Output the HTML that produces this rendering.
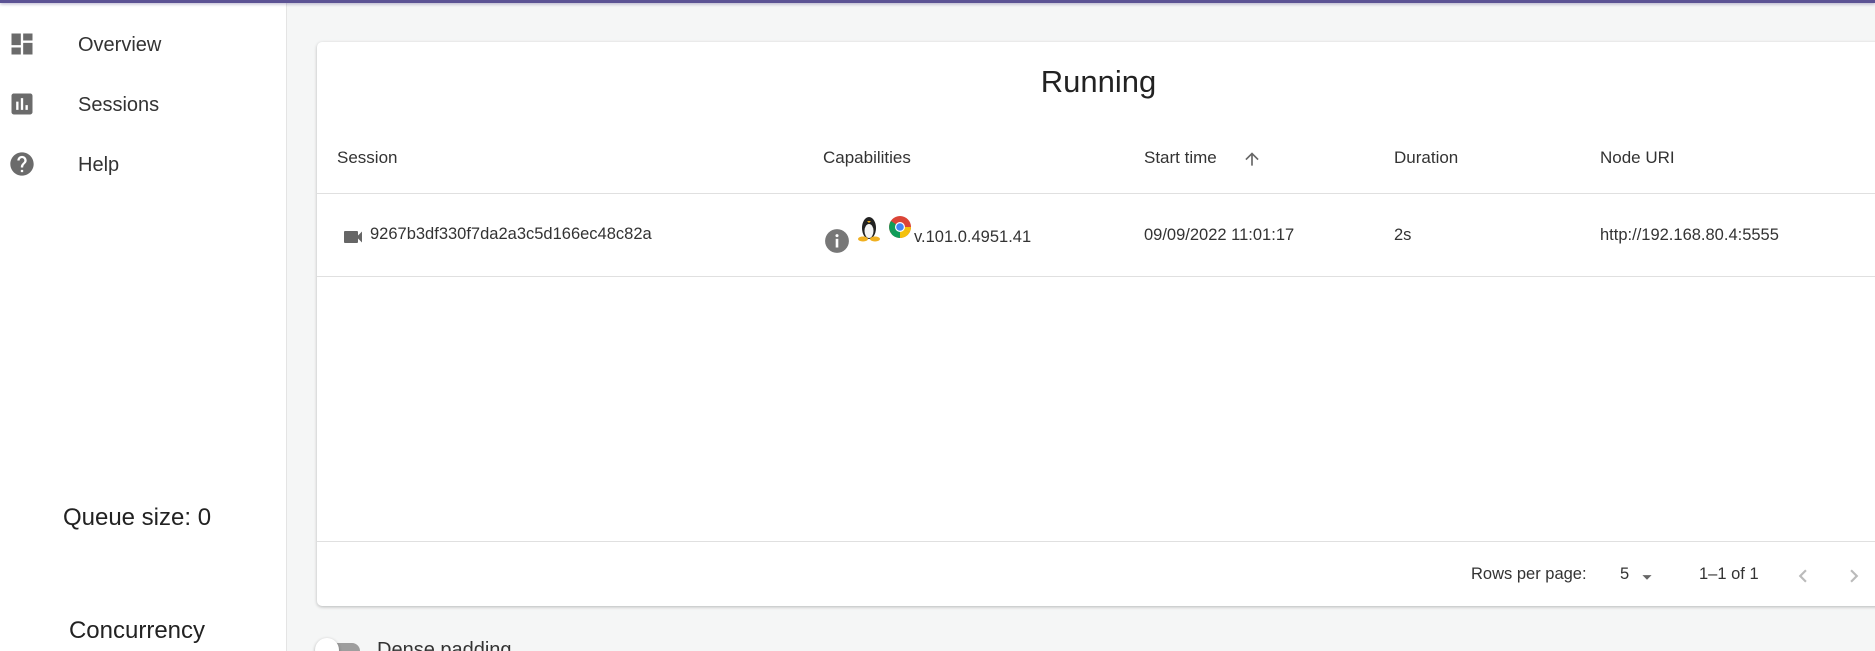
<!DOCTYPE html>
<html><head><style>
*{box-sizing:border-box;margin:0;padding:0}
html{overflow:hidden;height:651px}
body{width:1875px;height:651px;overflow:hidden;background:#f5f6f6;font-family:"Liberation Sans",sans-serif;color:#333;position:relative}
.top{position:absolute;left:0;top:0;width:1875px;height:3px;background:#5c5394;box-shadow:0 1px 3px rgba(60,50,120,.4);z-index:2}
.side{position:absolute;left:0;top:0;width:287px;height:651px;background:#fff;border-right:1px solid #e4e4e4}
.nav{position:absolute;left:78px;font-size:20px;color:#333}
.ico{position:absolute;left:8px}
.card{position:absolute;left:317px;top:42px;width:1570px;height:564px;background:#fff;border-radius:5px;box-shadow:0 1px 3px rgba(0,0,0,.25)}
.t{position:absolute;font-size:17px;color:#333;white-space:nowrap}
.line{position:absolute;left:0;width:100%;height:1px;background:#e0e0e0}
</style></head><body>
<div class="top"></div>
<div class="side">
<svg class="ico" style="top:30px" width="28" height="28" viewBox="0 0 24 24"><path fill="#6b6b6b" d="M3 13h8V3H3v10zm0 8h8v-6H3v6zm10 0h8V11h-8v10zm0-18v6h8V3h-8z"/></svg>
<div class="nav" style="top:34px">Overview</div>
<svg class="ico" style="top:90px" width="28" height="28" viewBox="0 0 24 24"><path fill="#6b6b6b" d="M19 3H5c-1.1 0-2 .9-2 2v14c0 1.1.9 2 2 2h14c1.1 0 2-.9 2-2V5c0-1.1-.9-2-2-2zM9 17H7v-7h2v7zm4 0h-2V7h2v10zm4 0h-2v-4h2v4z"/></svg>
<div class="nav" style="top:94px">Sessions</div>
<svg class="ico" style="top:150px" width="28" height="28" viewBox="0 0 24 24"><path fill="#6b6b6b" d="M12 2C6.48 2 2 6.48 2 12s4.48 10 10 10 10-4.48 10-10S17.52 2 12 2zm1 17h-2v-2h2v2zm2.07-7.75l-.9.92C13.45 12.9 13 13.5 13 15h-2v-.5c0-1.1.45-2.1 1.17-2.83l1.24-1.26c.37-.36.59-.86.59-1.41 0-1.1-.9-2-2-2s-2 .9-2 2H8c0-2.21 1.79-4 4-4s4 1.79 4 4c0 .88-.36 1.68-.93 2.25z"/></svg>
<div class="nav" style="top:154px">Help</div>
<div style="position:absolute;left:0;width:274px;text-align:center;top:504px;font-size:24px;color:#222">Queue size: 0</div>
<div style="position:absolute;left:0;width:274px;text-align:center;top:617px;font-size:24px;color:#222">Concurrency</div>
</div>
<div class="card">
<div class="t" style="left:0;width:1563px;text-align:center;top:22px;font-size:31px;color:#222">Running</div>
<div class="t" style="left:20px;top:106px">Session</div>
<div class="t" style="left:506px;top:106px">Capabilities</div>
<div class="t" style="left:827px;top:106px">Start time</div>
<svg style="position:absolute;left:925px;top:107px" width="20" height="20" viewBox="0 0 24 24"><path fill="#666" d="M4 12l1.41 1.41L11 7.83V20h2V7.83l5.58 5.59L20 12l-8-8-8 8z"/></svg>
<div class="t" style="left:1077px;top:106px">Duration</div>
<div class="t" style="left:1283px;top:106px">Node URI</div>
<div class="line" style="top:151px"></div>
<svg style="position:absolute;left:24px;top:183px" width="24" height="24" viewBox="0 0 24 24"><path fill="#666" d="M17 10.5V7c0-.55-.45-1-1-1H4c-.55 0-1 .45-1 1v10c0 .55.45 1 1 1h12c.55 0 1-.45 1-1v-3.5l4 4v-11l-4 4z"/></svg>
<div class="t" style="left:53px;top:183px;font-size:16.5px">9267b3df330f7da2a3c5d166ec48c82a</div>
<svg style="position:absolute;left:507px;top:186px" width="26" height="26" viewBox="0 0 24 24"><circle cx="12" cy="12" r="11" fill="#777"/><rect x="10.8" y="10" width="2.4" height="8" fill="#fff"/><circle cx="12" cy="7" r="1.4" fill="#fff"/></svg>
<svg style="position:absolute;left:540px;top:170px" width="24" height="30" viewBox="0 0 24 30"><ellipse cx="12" cy="16" rx="7" ry="11" fill="#222"/><ellipse cx="12" cy="19" rx="4.5" ry="7" fill="#f4f4f4"/><ellipse cx="6" cy="27" rx="5" ry="2.5" fill="#f0b020"/><ellipse cx="18" cy="27" rx="5" ry="2.5" fill="#f0b020"/><path d="M10 9h4l-2 2z" fill="#f0b020"/></svg>
<svg style="position:absolute;left:571px;top:173px" width="24" height="24" viewBox="0 0 24 24"><circle cx="12" cy="12" r="11" fill="#db4437"/><path d="M12 12L2.5 17.5A11 11 0 0 0 12 23z" fill="#0f9d58"/><path d="M12 12L2.5 17.5A11 11 0 0 1 3 6z" fill="#0f9d58"/><path d="M12 12L21.5 17.5A11 11 0 0 1 12 23z" fill="#f4c20d"/><path d="M12 12L23 12A11 11 0 0 1 21.5 17.5z" fill="#f4c20d"/><circle cx="12" cy="12" r="5" fill="#fff"/><circle cx="12" cy="12" r="3.8" fill="#4285f4"/></svg>
<div class="t" style="left:597px;top:186px;font-size:16.5px">v.101.0.4951.41</div>
<div class="t" style="left:827px;top:184px;font-size:16.5px">09/09/2022 11:01:17</div>
<div class="t" style="left:1077px;top:184px;font-size:16.5px">2s</div>
<div class="t" style="left:1283px;top:184px;font-size:16.5px">http://192.168.80.4:5555</div>
<div class="line" style="top:234px"></div>
<div class="line" style="top:499px"></div>
<div class="t" style="left:1154px;top:523px;font-size:16.5px">Rows per page:</div>
<div class="t" style="left:1303px;top:523px;font-size:16.5px">5</div>
<svg style="position:absolute;left:1319px;top:524px" width="22" height="22" viewBox="0 0 24 24"><path fill="#666" d="M7 10l5 5 5-5z"/></svg>
<div class="t" style="left:1382px;top:523px;font-size:16.5px">1–1 of 1</div>
<svg style="position:absolute;left:1473px;top:521px" width="26" height="26" viewBox="0 0 24 24"><path fill="#bbb" d="M15.41 7.41L14 6l-6 6 6 6 1.41-1.41L10.83 12z"/></svg>
<svg style="position:absolute;left:1524px;top:521px" width="26" height="26" viewBox="0 0 24 24"><path fill="#bbb" d="M10 6L8.59 7.41 13.17 12l-4.58 4.59L10 18l6-6z"/></svg>
</div>
<div style="position:absolute;left:320px;top:643px;width:40px;height:16px;border-radius:8px;background:#9e9e9e"></div>
<div style="position:absolute;left:315px;top:638px;width:24px;height:24px;border-radius:50%;background:#fff;box-shadow:0 1px 3px rgba(0,0,0,.3)"></div>
<div class="t" style="left:377px;top:639px;font-size:20px">Dense padding</div>
</body></html>
